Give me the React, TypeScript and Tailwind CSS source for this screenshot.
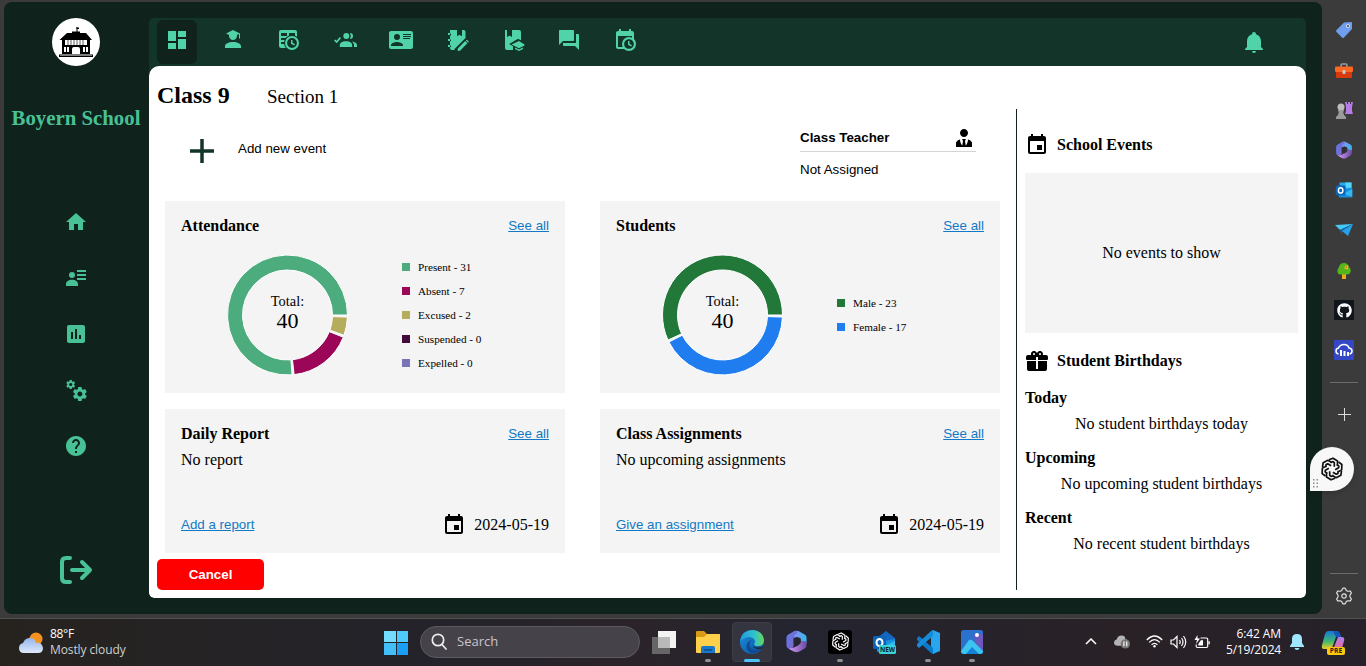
import type { ReactNode } from "react";
import { MdDashboard, MdForum, MdEvent, MdHome, MdPoll, MdHelp } from "react-icons/md";
import { FaGithub } from "react-icons/fa";

const SERIF = "font-['Liberation_Serif',serif]";
const SANS = "font-['Liberation_Sans',sans-serif]";

function Glyph({ d, size = 24 }: { d: string; size?: number }) {
  return (
    <svg width={size} height={size} viewBox="0 0 24 24" fill="currentColor">
      <path d={d} />
    </svg>
  );
}

const accountSchool =
  "M16 8C16 10.21 14.21 12 12 12C9.79 12 8 10.21 8 8L8.11 7.06L5 5.5L12 2L19 5.5V10.5H18V6L15.89 7.06L16 8M12 14C16.42 14 20 15.79 20 18V20H4V18C4 15.79 7.58 14 12 14Z";
const cardAccount =
  "M2,3H22C23.05,3 24,3.95 24,5V19C24,20.05 23.05,21 22,21H2C0.95,21 0,20.05 0,19V5C0,3.95 0.95,3 2,3M14,6V7H22V6H14M14,8V9H21.5L22,9V8H14M14,10V11H21V10H14M8,13.91C6,13.91 2,15 2,17V18H14V17C14,15 10,13.91 8,13.91M8,6A3,3 0 0,0 5,9A3,3 0 0,0 8,12A3,3 0 0,0 11,9A3,3 0 0,0 8,6Z";
const calendarClock =
  "M15,13H16.5V15.82L18.94,17.23L18.19,18.53L15,16.69V13M19,8H5V19H9.67C9.24,18.09 9,17.07 9,16A7,7 0 0,1 16,9C17.07,9 18.09,9.24 19,9.67V8M5,21C3.89,21 3,20.1 3,19V5C3,3.89 3.89,3 5,3H6V1H8V3H16V1H18V3H19A2,2 0 0,1 21,5V11.1C22.24,12.36 23,14.09 23,16A7,7 0 0,1 16,23C14.09,23 12.36,22.24 11.1,21H5M16,11.15A4.85,4.85 0 0,0 11.15,16C11.15,18.68 13.32,20.85 16,20.85A4.85,4.85 0 0,0 20.85,16C20.85,13.32 18.68,11.15 16,11.15Z";
const bell =
  "M21,19V20H3V19L5,17V11C5,7.9 7.03,5.17 10,4.29C10,4.19 10,4.1 10,4A2,2 0 0,1 12,2A2,2 0 0,1 14,4C14,4.1 14,4.19 14,4.29C16.97,5.17 19,7.9 19,11V17L21,19M14,21A2,2 0 0,1 12,23A2,2 0 0,1 10,21";
const gift =
  "M9.06,1.93C7.17,1.92 5.33,3.74 6.17,6H3A2,2 0 0,0 1,8V10A1,1 0 0,0 2,11H11V8H13V11H22A1,1 0 0,0 23,10V8A2,2 0 0,0 21,6H17.83C19,2.73 14.6,0.42 12.57,3.24L12,4L11.43,3.22C10.8,2.33 9.93,1.94 9.06,1.93M9,4C9.89,4 10.34,5.08 9.71,5.71C9.08,6.34 8,5.89 8,5A1,1 0 0,1 9,4M15,4C15.89,4 16.34,5.08 15.71,5.71C15.08,6.34 14,5.89 14,5A1,1 0 0,1 15,4M2,12V20A2,2 0 0,0 4,22H20A2,2 0 0,0 22,20V12H13V20H11V12H2Z";
const accountTie =
  "M12 3C14.21 3 16 4.79 16 7C16 9.21 14.21 11 12 11C9.79 11 8 9.21 8 7C8 4.79 9.79 3 12 3M16 13.54C16 14.6 15.72 17.07 13.81 19.83L13 15L13.94 13.12C13.32 13.05 12.67 13 12 13C11.33 13 10.68 13.05 10.06 13.12L11 15L10.19 19.83C8.28 17.07 8 14.6 8 13.54C5.61 14.24 4 15.5 4 17V21H20V17C20 15.5 18.4 14.24 16 13.54Z";
const accountDetails =
  "M8,6A3,3 0 0,1 8,12A3,3 0 0,1 8,6M2,20V18C2,15.5 4.7,13.7 8,13.7C11.3,13.7 14,15.5 14,18V20ZM13,4H22V6H13ZM13,8H22V10H13ZM13,12H22V14H13Z";
const cogs =
  "M15.9,18.45C17.25,18.45 18.35,17.35 18.35,16C18.35,14.65 17.25,13.55 15.9,13.55C14.54,13.55 13.45,14.65 13.45,16C13.45,17.35 14.54,18.45 15.9,18.45M21.1,16.68L22.58,17.84C22.71,17.95 22.75,18.13 22.66,18.29L21.26,20.71C21.17,20.86 21,20.92 20.83,20.86L19.09,20.16C18.73,20.44 18.33,20.67 17.91,20.85L17.64,22.7C17.62,22.87 17.47,23 17.3,23H14.5C14.32,23 14.18,22.87 14.15,22.7L13.89,20.85C13.46,20.67 13.07,20.44 12.71,20.16L10.96,20.86C10.81,20.92 10.62,20.86 10.54,20.71L9.14,18.29C9.05,18.13 9.09,17.95 9.22,17.84L10.7,16.68L10.65,16L10.7,15.31L9.22,14.16C9.09,14.05 9.05,13.86 9.14,13.71L10.54,11.29C10.62,11.13 10.81,11.07 10.96,11.13L12.71,11.84C13.07,11.56 13.46,11.32 13.89,11.15L14.15,9.29C14.18,9.13 14.32,9 14.5,9H17.3C17.47,9 17.62,9.13 17.64,9.29L17.91,11.15C18.33,11.32 18.73,11.56 19.09,11.84L20.83,11.13C21,11.07 21.17,11.13 21.26,11.29L22.66,13.71C22.75,13.86 22.71,14.05 22.58,14.16L21.1,15.31L21.15,16L21.1,16.68M6.69,8.07C7.56,8.07 8.26,7.37 8.26,6.5C8.26,5.63 7.56,4.92 6.69,4.92A1.58,1.58 0 0,0 5.11,6.5C5.11,7.37 5.82,8.07 6.69,8.07M10.03,6.94L11,7.68C11.07,7.75 11.09,7.87 11.03,7.97L10.13,9.53C10.08,9.63 9.96,9.67 9.86,9.63L8.74,9.18L8,9.62L7.81,10.81C7.79,10.92 7.7,11 7.59,11H5.79C5.67,11 5.58,10.92 5.56,10.81L5.4,9.62L4.64,9.18L3.52,9.63C3.41,9.67 3.3,9.63 3.24,9.53L2.34,7.97C2.28,7.87 2.31,7.75 2.39,7.68L3.34,6.94L3.31,6.5L3.34,6.06L2.39,5.32C2.31,5.25 2.28,5.13 2.34,5.03L3.24,3.47C3.3,3.37 3.41,3.33 3.52,3.37L4.63,3.82L5.4,3.38L5.56,2.19C5.58,2.08 5.67,2 5.79,2H7.59C7.7,2 7.79,2.08 7.81,2.19L8,3.38L8.74,3.82L9.86,3.37C9.96,3.33 10.08,3.37 10.13,3.47L11.03,5.03C11.09,5.13 11.07,5.25 11,5.32L10.03,6.06L10.06,6.5L10.03,6.94Z";

const HEADER_BG = "#133429";

function TableClock() {
  return (
    <svg width="24" height="24" viewBox="0 0 24 24" fill="currentColor">
      <path fillRule="evenodd" d="M4 2H18A2 2 0 0 1 20 4V20H4A2 2 0 0 1 2 18V4A2 2 0 0 1 4 2ZM4 5V8H10V5ZM12 5V8H18V5ZM4 10V12H9V10ZM4 14V16H8V14Z" />
      <circle cx="15" cy="15" r="8" fill={HEADER_BG} />
      <path fillRule="evenodd" d="M15 8A7 7 0 1 1 15 22A7 7 0 1 1 15 8ZM15 10.1A4.9 4.9 0 1 0 15 19.9A4.9 4.9 0 1 0 15 10.1Z" />
      <path d="M14 12H15.5V14.8L18 16.2L17.2 17.5L14 15.7Z" />
    </svg>
  );
}

function PeopleCheck() {
  return (
    <svg width="24" height="24" viewBox="0 0 24 24" fill="currentColor">
      <path d="M1 12.6L2.2 11.4L3.6 12.8L6.8 9.1L8 10.3L3.7 15.2Z" />
      <circle cx="13.3" cy="8" r="3" />
      <path d="M17 5A3 3 0 1 1 17 11Q18.6 8 17 5Z" />
      <path d="M6.8 19V17.4C6.8 14.6 9.6 13.3 13 13.3S19.2 14.6 19.2 17.4V19ZM18.8 13.4C22 13.8 24 15 24 17.2V19H21V17.3C21 15.7 20.2 14.3 18.8 13.4Z" />
    </svg>
  );
}

function NotebookEdit() {
  return (
    <svg width="24" height="24" viewBox="0 0 24 24" fill="currentColor">
      <path d="M5 2H12V8.2L14.5 6.7L17 8.2V2H19A2 2 0 0 1 20.5 4V10L9.5 21V22H7A2 2 0 0 1 5 20Z" />
      <path d="M3 5H7V7H3ZM3 11H7V13H3ZM3 17H7V19H3Z" />
      <path d="M5 7.5H6V5.5H5ZM5 13H6V11.5H5ZM5 19H6V17.5H5Z" fill={HEADER_BG} />
      <path d="M12.8 20.5L20.2 13.1L22.4 15.3L15 22.7L12.8 23ZM20.9 12.4L21.3 12Q21.8 11.5 22.4 12.1L23.5 13.2Q24 13.7 23.5 14.3L23 14.7Z" />
    </svg>
  );
}

function BookEducation() {
  return (
    <svg width="24" height="24" viewBox="0 0 24 24" fill="currentColor">
      <path d="M4 2H6V9L8.5 7.5L11 9V2H18A2 2 0 0 1 20 4V12.2L17 10.8L8.2 16L12 18.3V22H6A2 2 0 0 1 4 20Z" />
      <path d="M18 13L10.5 16.6L18 20.2L23.5 17.6V16.6ZM14 19.6V21L18 23L22 21V19.600L18 21.6Z" />
    </svg>
  );
}

function SchoolLogo() {
  return (
    <svg width="48" height="48" viewBox="0 0 48 48">
      <circle cx="24" cy="24" r="24" fill="#fff" />
      <path d="M25 9V14" stroke="#000" strokeWidth="1" />
      <path d="M24.5 9.5H27V11H24.5Z" />
      <path d="M20 13.5H28V15H34L40 22H38V36H10V22H7.500L15 15H20Z" />
      <path d="M7 36.500H41V39H7Z" />
      <path d="M8 37.500H40" stroke="#fff" strokeWidth="0.5" />
      <g fill="#fff">
        <path d="M13 22H35V27H13Z" />
        <path d="M12 29H14V34H12ZM15 29H17V34H15ZM31 29H33V34H31ZM34 29H36V34H34Z" />
        <path d="M20 36V31Q20 29 22 29H26Q28 29 28 31V36Z" />
      </g>
      <path d="M16 22V27M19 22V27M22 22V27M25 22V27M28 22V27M31 22V27" stroke="#333" strokeWidth=".8" />
    </svg>
  );
}

interface Slice {
  label: string;
  value: number;
  fill: string;
  swatch: string;
}

function point(r: number, deg: number) {
  const a = (deg * Math.PI) / 180;
  return `${(60.5 + r * Math.cos(a)).toFixed(2)} ${(60 - r * Math.sin(a)).toFixed(2)}`;
}

function Donut({ slices }: { slices: Slice[] }) {
  const filled = slices.filter((s) => s.value > 0);
  const total = filled.reduce((sum, s) => sum + s.value, 0);
  const span = 360 - filled.length * 2;
  let cursor = 0;
  return (
    <div className="grid size-[121px] place-items-center">
      <svg width="121" height="121" viewBox="0 0 121 121" className="col-start-1 row-start-1 overflow-visible">
        {filled.map((s) => {
          const start = cursor;
          const end = start + (s.value / total) * span;
          cursor = end + 2;
          const big = end - start > 180 ? 1 : 0;
          return (
            <path
              key={s.label}
              d={`M${point(60, start)}A60 60 0 ${big} 0 ${point(60, end)}L${point(45, end)}A45 45 0 ${big} 1 ${point(45, start)}Z`}
              fill={s.fill}
              stroke="#fff"
            />
          );
        })}
      </svg>
      <div className="col-start-1 row-start-1 flex flex-col items-center pb-1.5">
        <span className="text-[14.4px] leading-4">Total:</span>
        <span className="text-[22px] leading-6">{total}</span>
      </div>
    </div>
  );
}

function Link({ children }: { children: ReactNode }) {
  return (
    <a href="#" className={`${SANS} text-[13.333px] leading-4 text-[#1179c5] underline`}>
      {children}
    </a>
  );
}

function StatCard({ title, slices }: { title: string; slices: Slice[] }) {
  return (
    <section className="flex h-48 flex-col bg-[#f4f4f4] px-4 pt-4">
      <div className="flex h-[38px] items-start justify-between">
        <h3 className="text-base leading-[18px] font-bold">{title}</h3>
        <span className="flex pt-px"><Link>See all</Link></span>
      </div>
      <div className="flex h-[121px] items-center pl-[46px]">
        <Donut slices={slices} />
        <ul className="ml-[54px] flex flex-col pb-px">
          {slices.map((s) => (
            <li key={s.label} className="flex h-6 items-center gap-2 text-[11.2px]">
              <span className={`size-2 ${s.swatch}`} />
              {s.label} - {s.value}
            </li>
          ))}
        </ul>
      </div>
    </section>
  );
}

function TaskCard({ title, empty, action }: { title: string; empty: string; action: string }) {
  return (
    <section className="flex h-36 flex-col bg-[#f4f4f4] px-4 pt-4">
      <div className="flex h-[26px] items-start justify-between">
        <h3 className="text-base leading-[18px] font-bold">{title}</h3>
        <span className="flex pt-px"><Link>See all</Link></span>
      </div>
      <p className="text-base leading-[18px]">{empty}</p>
      <div className="mt-11 flex h-6 items-center justify-between">
        <Link>{action}</Link>
        <span className="flex items-center gap-2 text-base leading-6">
          <MdEvent size={24} /> 2024-05-19
        </span>
      </div>
    </section>
  );
}

const attendance: Slice[] = [
  { label: "Present", value: 31, fill: "#4dac7d", swatch: "bg-[#4dac7d]" },
  { label: "Absent", value: 7, fill: "#9b0658", swatch: "bg-[#9b0658]" },
  { label: "Excused", value: 2, fill: "#b6ad5c", swatch: "bg-[#b6ad5c]" },
  { label: "Suspended", value: 0, fill: "#430a3e", swatch: "bg-[#430a3e]" },
  { label: "Expelled", value: 0, fill: "#7974b8", swatch: "bg-[#7974b8]" },
];
const students: Slice[] = [
  { label: "Male", value: 23, fill: "#227839", swatch: "bg-[#227839]" },
  { label: "Female", value: 17, fill: "#207df0", swatch: "bg-[#207df0]" },
];
const birthdays = [
  ["Today", "No student birthdays today"],
  ["Upcoming", "No upcoming student birthdays"],
  ["Recent", "No recent student birthdays"],
];

const navIcons = [
  <MdDashboard size={24} />,
  <Glyph d={accountSchool} />,
  <TableClock />,
  <PeopleCheck />,
  <Glyph d={cardAccount} />,
  <NotebookEdit />,
  <BookEducation />,
  <MdForum size={24} />,
  <Glyph d={calendarClock} />,
];
const sideIcons = [
  <MdHome size={24} />,
  <Glyph d={accountDetails} />,
  <MdPoll size={24} />,
  <Glyph d={cogs} />,
  <MdHelp size={24} />,
];

function Hexagon({ size, hole }: { size: number; hole: string }) {
  return (
    <svg width={size} height={size} viewBox="0 0 24 24">
      <defs>
        <linearGradient id="hexTop" x1="0" x2="1"><stop stopColor="#8a8ff0" /><stop offset="1" stopColor="#35b8f0" /></linearGradient>
        <linearGradient id="hexLeft" x1="0" y1="0" x2="1" y2="1"><stop stopColor="#5a7be8" /><stop offset="1" stopColor="#8a62c8" /></linearGradient>
        <linearGradient id="hexLow" x1="0" x2="1"><stop stopColor="#d39af2" /><stop offset="1" stopColor="#6a4aa6" /></linearGradient>
      </defs>
      <path d="M9 1.500Q12 0 15 1.500L21 5Q22.500 6 22.500 8V14L16 11V8H9Z" fill="url(#hexTop)" />
      <path d="M9 1.500L3 5Q1.500 6 1.500 8V16Q1.500 18 3 19L7 21L9 16V8Q9 5 13 3L12 .7Z" fill="url(#hexLeft)" />
      <path d="M22.500 12V16Q22.500 18 21 19L15 22.500Q12 24 9 22.500L4 19.500Q9 19 15 15V11Z" fill="url(#hexLow)" />
      <path d="M9 9L12.500 7L16.500 9.500V13.500L12.500 16.500L9 14.500Z" fill={hole} />
    </svg>
  );
}

function Outlook({ size, tag }: { size: number; tag?: boolean }) {
  return (
    <svg width={size} height={size} viewBox="0 0 24 24">
      {tag ? (
        <path d="M5 8L14 1L23 8V20H5Z" fill="#1466c0" />
      ) : (
        <path d="M6 2H21Q22 2 22 3V21H6Z" fill="#28a8ea" />
      )}
      <path d="M14 2H22V9H14Z" fill="#50d9ff" opacity={tag ? 0 : 1} />
      <path d="M5 12L23 9V21Q23 22 22 22H6Q5 22 5 21Z" fill="#1490df" />
      <path d="M10 17L23 11V21Z" fill="#35b8f1" />
      <rect x="1" y="6" width="13" height="13" rx="1.5" fill="#0a64b8" />
      <ellipse cx="7.500" cy="12.500" rx="3" ry="3.500" fill="none" stroke="#fff" strokeWidth="2" />
      {tag && (
        <>
          <rect x="7" y="15" width="17" height="9" rx="1.5" fill="#37d3d6" />
          <text x="15.500" y="22" textAnchor="middle" fontSize="6.500" fontWeight="700" fontFamily="Open Sans" fill="#10242b">NEW</text>
        </>
      )}
    </svg>
  );
}

function Swirl({ size, color, weight }: { size: number; color: string; weight: number }) {
  return (
    <svg width={size} height={size} viewBox="-12 -12 24 24" fill="none" stroke={color} strokeWidth={weight} strokeLinejoin="round">
      {[0, 60, 120, 180, 240, 300].map((r) => (
        <path key={r} transform={`rotate(${r})`} d="M-3 -9.200L1 -10.800L5.500 -8V-3.800M-1.500 -6.200L1 -7.400L2.300 -6.300V-2.300" />
      ))}
    </svg>
  );
}

function Tag() {
  return (
    <svg width="18" height="18" viewBox="0 0 18 18">
      <path d="M9 1.500L16 1Q17 1 17 2V8L9 16.500Q8 17.500 7 16.500L1.500 11Q.5 10 1.500 9Z" fill="#6f9fec" />
      <circle cx="13" cy="5" r="1.800" fill="#fff" /><circle cx="13" cy="5" r="1" fill="#333" />
    </svg>
  );
}

function Toolbox() {
  return (
    <svg width="18" height="16" viewBox="0 0 18 16" className="mt-0.5">
      <path d="M6 4V2Q6 1 7 1H11Q12 1 12 2V4" fill="none" stroke="#9a9a9a" strokeWidth="1.500" />
      <rect y="3.500" width="18" height="5.500" rx="1" fill="#fb6725" />
      <path d="M1 9H17V14Q17 15 16 15H2Q1 15 1 14Z" fill="#d93a0c" />
      <rect x="7.500" y="7" width="3" height="4" rx="1" fill="#c6ccd2" />
    </svg>
  );
}

function Chess() {
  return (
    <svg width="18" height="20" viewBox="0 0 18 20">
      <path d="M10 2H12V4H13V2H15V4H16V2H18L17 7V11L18 14H10L11 11V7Z" fill="#b77ae6" />
      <circle cx="6" cy="7" r="3.500" fill="#bdbdbd" />
      <path d="M3 10H9V11.500H8L9 15L11 17V19H1V17L3 15L4 11.500H3Z" fill="#9b9b9b" />
    </svg>
  );
}

function Plane() {
  return (
    <svg width="18" height="14" viewBox="0 0 18 14">
      <path d="M0 2L18 1L5 7Z" fill="#45c9f5" /><path d="M5 7L18 1L7 9V12Z" fill="#1264a8" /><path d="M7 8L18 1L13 13Z" fill="#26a0e8" />
    </svg>
  );
}

function Tree() {
  return (
    <svg width="16" height="18" viewBox="0 0 16 18" className="mt-0.5">
      <path d="M6 11H10V17H6Z" fill="#f0a91b" />
      <path d="M8 1Q12 1 13 5Q16 8 14 11Q13 13 10 12.500H5Q2 13 1.500 10Q1 8 3 5Q4 1 8 1Z" fill="#55b51c" />
      <path d="M9.500 3L11 4L12.500 3.500L12 5.500L12 7.500L9.500 7L8 6L9 5Z" fill="#ffb818" /><circle cx="10.400" cy="5.300" r=".7" fill="#e04b1c" />
    </svg>
  );
}

function CloudTile() {
  return (
    <span className="grid size-5 place-items-center bg-[#3448c5]">
      <svg width="18" height="14" viewBox="0 0 18 14" fill="none" stroke="#fff" strokeWidth="1.500">
        <path d="M3.500 11Q1 10.500 1 8Q1 5.500 3.500 5Q5 1.500 9 1.500Q13 1.500 14 5Q17 5.500 17 8Q17 10.500 14.500 11" />
        <path d="M6 7V13M9.500 8V13M13 9V13" strokeWidth="2" />
      </svg>
    </span>
  );
}

const railIcons = [
  <Tag />,
  <Toolbox />,
  <Chess />,
  <Hexagon size={18} hole="#303034" />,
  <Outlook size={18} />,
  <Plane />,
  <Tree />,
  <span className="grid size-5 place-items-center bg-[#10151b] text-white"><FaGithub size={15} /></span>,
  <CloudTile />,
];

function GearOutline() {
  const pts = Array.from({ length: 24 }, (_, i) => {
    const r = i % 4 < 2 ? 8 : 6;
    const a = ((i * 15 - 97.5) * Math.PI) / 180;
    return `${(9 + r * Math.cos(a)).toFixed(2)},${(9 + r * Math.sin(a)).toFixed(2)}`;
  }).join(" ");
  return (
    <svg width="18" height="18" viewBox="0 0 18 18" fill="none" stroke="#ddd" strokeWidth="1.200" strokeLinejoin="round">
      <polygon points={pts} /><circle cx="9" cy="9" r="2.200" />
    </svg>
  );
}

function Rail() {
  return (
    <aside className="relative flex h-[618px] w-11 flex-col items-center pt-2.5">
      {railIcons.map((icon, i) => (
        <span key={i} className="flex h-10 items-center justify-center">{icon}</span>
      ))}
      <span className="mt-3 h-px w-7 bg-[#6c6c6c]" />
      <svg width="13" height="13" viewBox="0 0 13 13" className="mt-[25px]" stroke="#ddd"><path d="M6.500 0V13M0 6.500H13" /></svg>
      <span className="mt-[152px] h-px w-7 bg-[#6c6c6c]" />
      <span className="mt-[13px]"><GearOutline /></span>
      <div className="absolute top-[447px] -left-3 grid size-11 place-items-center rounded-full rounded-bl-sm bg-[#f8f8f8] shadow-md">
        <Swirl size={24} color="#111" weight={1.7} />
        <svg width="6" height="9" viewBox="0 0 6 9" fill="#8b8b96" className="absolute bottom-[3px] left-[3px]">
          <path d="M0 0H1.500V1.500H0ZM3.500 0H5V1.500H3.500ZM0 3.500H1.500V5H0ZM3.500 3.500H5V5H3.500ZM0 7H1.500V8.500H0ZM3.500 7H5V8.500H3.500Z" />
        </svg>
      </div>
    </aside>
  );
}

function Edge() {
  return (
    <svg width="24" height="24" viewBox="0 0 24 24">
      <defs>
        <linearGradient id="edgeTop" x1="0" x2="1"><stop stopColor="#219be0" /><stop offset=".6" stopColor="#2fc2cf" /><stop offset="1" stopColor="#68d953" /></linearGradient>
        <linearGradient id="edgeLow" x1="0" y1="0" x2="1" y2="1"><stop stopColor="#1c91dd" /><stop offset="1" stopColor="#0c4c9a" /></linearGradient>
      </defs>
      <circle cx="12" cy="12" r="12" fill="url(#edgeLow)" />
      <path d="M0 11Q2 0 13 0Q23 1 24 10Q24 16 18 16Q14 16 14 14Q16 12 14 9Q9 4 0 11Z" fill="url(#edgeTop)" />
      <path d="M10 12Q8 18 14 20Q19 21 22 18Q18 24 11 23Q5 20 7 14Q8 11 12 10Z" fill="#104b91" />
      <path d="M13 16Q16 19 24 16L22 18.500Q18 20 14 18Z" fill="#242630" />
    </svg>
  );
}

function Explorer() {
  return (
    <svg width="26" height="24" viewBox="0 0 26 24">
      <path d="M1 2Q1 1 2 1H9L12 4H24Q25 4 25 5V10H1Z" fill="#d99a16" />
      <path d="M1 7H9L12 4H24Q25 4 25 5V22Q25 23 24 23H2Q1 23 1 22Z" fill="#ffd04a" />
      <path d="M6 23V18Q6 16 8 16H18Q20 16 20 18V23Z" fill="#1b78c9" /><path d="M9 19H17V21H9Z" fill="#0e569b" />
    </svg>
  );
}

function VsCode() {
  return (
    <svg width="24" height="24" viewBox="0 0 24 24">
      <path d="M17 0L24 3V21L17 24L15 22V2Z" fill="#27a5ef" />
      <path d="M1 8L3 6L17 18V24L15 23L1 10Z" fill="#0b79c9" /><path d="M1 16L3 18L17 6V0L15 1L1 14Z" fill="#158bd9" />
    </svg>
  );
}

function Photos() {
  return (
    <svg width="24" height="24" viewBox="0 0 24 24">
      <rect x="1" y="0" width="22" height="24" rx="2.500" fill="#2b72cf" />
      <path d="M14 4H23V20L15 13Z" fill="#6b57bd" />
      <path d="M1 21L9 10Q11 9 13 11L23 21Q23 24 20 24H4Q1 24 1 21Z" fill="#3cc4ef" /><path d="M6 24L12 17L19 24Z" fill="#1480d6" />
      <circle cx="17" cy="5" r="2" fill="#fff" />
    </svg>
  );
}

function Desktops() {
  return (
    <svg width="24" height="24" viewBox="0 0 24 24">
      <path d="M6 1H24V18H6Z" fill="#f3f3f3" /><path d="M0 7H18V24H0Z" fill="#666" /><path d="M6 7H18V18H6Z" fill="#b9b9b9" />
    </svg>
  );
}

const tasks: { icon: ReactNode; mark: string }[] = [
  { icon: <Desktops />, mark: "" },
  { icon: <Explorer />, mark: "w-1.5 bg-[#909090]" },
  { icon: <Edge />, mark: "w-4 bg-[#4cc2ff]" },
  { icon: <Hexagon size={23} hole="#242530" />, mark: "" },
  { icon: <span className="grid size-6 place-items-center rounded-[3px] bg-black"><Swirl size={19} color="#fff" weight={1.5} /></span>, mark: "w-1.5 bg-[#909090]" },
  { icon: <Outlook size={24} tag />, mark: "" },
  { icon: <VsCode />, mark: "w-1.5 bg-[#909090]" },
  { icon: <Photos />, mark: "w-1.5 bg-[#909090]" },
];

function Weather() {
  return (
    <svg width="26" height="22" viewBox="0 0 26 22">
      <defs><linearGradient id="cloud" x1="0" y1="0" x2="0" y2="1"><stop stopColor="#93b5ee" /><stop offset="1" stopColor="#dfe9fa" /></linearGradient></defs>
      <circle cx="18" cy="7" r="6.500" fill="#f6931e" />
      <path d="M6 21Q1 21 1 16Q1 12 5 11Q7 6 12 6Q17 6 18 11Q24 10 25 16Q25 21 20 21Z" fill="url(#cloud)" />
    </svg>
  );
}

function Copilot() {
  return (
    <svg width="24" height="26" viewBox="0 0 24 26">
      <defs>
        <linearGradient id="coA" x1="0" y1="0" x2="0" y2="1"><stop stopColor="#1677db" /><stop offset=".6" stopColor="#45b96b" /><stop offset="1" stopColor="#f2cc25" /></linearGradient>
        <linearGradient id="coB" x1="0" y1="0" x2="0" y2="1"><stop stopColor="#aa7ef2" /><stop offset="1" stopColor="#f76a85" /></linearGradient>
      </defs>
      <path d="M7 1H16Q18 1 19 4L20 7H15L11 18Q10 19 8 19H3Q0 19 1 15L4 4Q5 1 7 1Z" fill="url(#coA)" />
      <path d="M17 7H21Q24 7 23 11L21 18Q20 21 17 21H9Q12 20 13 17Z" fill="url(#coB)" />
      <path d="M12 1H16Q18 1 19 4L20 7H15Z" fill="#1556bd" />
      <rect x="6" y="17" width="18" height="8" rx="2" fill="#ffc90e" />
      <text x="15" y="23.400" textAnchor="middle" fontSize="6.800" fontWeight="700" fontFamily="Open Sans" fill="#2a2110">PRE</text>
    </svg>
  );
}

function Taskbar() {
  return (
    <footer className="flex h-12 items-center border-t border-[#505050] bg-[linear-gradient(90deg,#26231f_0%,#24232b_32%,#2b2329_46%,#242530_58%,#292126_82%,#26212a_100%)] font-['Open_Sans','Noto_Sans',sans-serif] text-xs text-white">
      <div className="flex w-[384px] items-center gap-1.5 pl-[18px]">
        <Weather />
        <div className="flex flex-col pb-0.5 text-[12px] leading-4">
          <span className="tracking-[-0.3px]">88°F</span>
          <span className="tracking-[-0.1px] text-[#cfcfcf]">Mostly cloudy</span>
        </div>
      </div>
      <div className="grid size-6 grid-cols-2 gap-px">
        <i className="bg-[#74dcff]" /><i className="bg-[#4fcbfb]" /><i className="bg-[#42bef8]" /><i className="bg-[#199ff5]" />
      </div>
      <div className="mb-0.5 ml-3 flex h-8 w-[220px] items-center gap-2.5 rounded-full border border-[#5c5961] bg-[#46424a] pl-2.5 text-[13px] text-[#c8c6ca]">
        <svg width="16" height="17" viewBox="0 0 16 17" fill="none" stroke="#ececec" strokeWidth="1.700" strokeLinecap="round"><circle cx="7" cy="7" r="5.700" /><path d="M11 11.500L15 16" /></svg>
        Search
      </div>
      <div className="mb-0.5 ml-0.5 flex">
        {tasks.map((t, i) => (
          <span key={i} className="flex w-11 justify-center">
            <span className={`flex h-10 w-10 flex-col items-center rounded-[4px] border pt-[7px] ${i === 2 ? "border-[#3d3e48] bg-[#34353f]" : "border-transparent"}`}>
              <span className="grid h-6 place-items-center">{t.icon}</span>
              <span className={`mt-[5px] h-[3px] shrink-0 rounded-full ${t.mark}`} />
            </span>
          </span>
        ))}
      </div>
      <div className="ml-[91px] flex items-center pb-0.5">
        <svg width="12" height="7" viewBox="0 0 12 7" fill="none" stroke="#fff" strokeWidth="1.500"><path d="M1 6L6 1L11 6" /></svg>
        <svg width="17" height="16" viewBox="0 0 18 16" className="ml-[17px]">
          <path d="M4 12Q0 12 0 8.500Q0 6 3 5Q4 1 8 1Q12 1 12 5Q15 5 15 9Q15 12 12 12Z" fill="#b4b4b4" />
          <circle cx="12" cy="10" r="5" fill="#777" /><path d="M10.500 7.500V12.500M13.500 7.500V12.500" stroke="#fff" strokeWidth="1.200" />
        </svg>
        <svg width="17" height="13" viewBox="0 0 17 13" className="ml-[15px]" fill="none" stroke="#fff" strokeWidth="1.300">
          <path d="M.8 5Q8.500 -3 16.200 5M3.200 7.400Q8.500 2 13.800 7.400M5.600 9.700Q8.500 7 11.400 9.700" /><circle cx="8.500" cy="11.300" r="1.200" fill="#fff" stroke="none" />
        </svg>
        <svg width="17" height="14" viewBox="0 0 17 14" className="ml-[7px]" fill="none" stroke="#fff" strokeWidth="1.200">
          <path d="M1 5H3.500L7 1.500V12.500L3.500 9H1ZM9.500 5Q11 7 9.500 9M11.500 3Q14.500 7 11.500 11M13.500 1Q18 7 13.500 13" />
        </svg>
        <svg width="16" height="14" viewBox="0 0 16 14" className="ml-[7px]" fill="none" stroke="#fff" strokeWidth="1.200">
          <path d="M6.500 3H12.500Q13.700 3 13.700 4.200V11.300Q13.700 12.500 12.500 12.500H3.500Q2.200 12.500 2.200 11.300V9.500M15.200 6.200V9.300" /><path d="M6.800 5.200H9V10.400H4.300V9Z" fill="#fff" stroke="none" /><path d="M3.500 0L.5 5H3L2 9L6 3.500H3.500Z" fill="#fff" stroke="none" />
        </svg>
        <div className="ml-[7px] w-16 text-right text-[12px] leading-4 whitespace-nowrap">
          <div className="tracking-[-0.1px]">6:42 AM</div>
          <div className="tracking-[-0.2px]">5/19/2024</div>
        </div>
        <svg width="14" height="16" viewBox="0 0 14 16" className="ml-[9px]" fill="#9fe6ff"><path d="M7 0Q12 0 12 5V9L14 12V13H0V12L2 9V5Q2 0 7 0ZM4.500 14H9.500Q9 16 7 16T4.500 14Z" /></svg>
        <span className="ml-[17px] pt-0.5"><Copilot /></span>
      </div>
    </footer>
  );
}

export default function App() {
  return (
    <div className={`${SERIF} flex h-[666px] w-[1366px] flex-col overflow-hidden bg-[#3b3b3b] text-black`}>
      <div className="flex h-[618px]">
        <div className="mt-0.5 ml-1 flex h-[612px] w-[1318px] rounded-lg bg-[#0f231c]">
          <aside className="flex w-[145px] flex-col items-center pt-4 pr-px text-[#49c196]">
            <SchoolLogo />
            <h2 className="mt-10 text-[20.8px] leading-6 font-bold whitespace-nowrap">Boyern School</h2>
            <nav className="mt-20 flex flex-col gap-8">
              {sideIcons.map((icon, i) => <span key={i} className="size-6">{icon}</span>)}
            </nav>
            <svg width="34" height="30" viewBox="0 0 34 30" className="mt-[97px]" fill="none" stroke="currentColor" strokeWidth="4" strokeLinecap="round" strokeLinejoin="round">
              <path d="M11 3H7Q3 3 3 7V23Q3 27 7 27H11M13 15H31M23 7L31 15L23 23" />
            </svg>
          </aside>
          <div className="mt-4 flex h-[580px] w-[1157px] flex-col overflow-hidden rounded-[5px] bg-[#133429]">
            <header className="flex h-12 items-start justify-between pt-0.5 pr-10 pl-2 text-[#50d3a8]">
              <nav className="flex gap-4">
                {navIcons.map((icon, i) => (
                  <span key={i} className={`flex h-11 w-10 justify-center rounded-md pt-2 ${i === 0 ? "bg-[#0f231c]" : ""}`}>{icon}</span>
                ))}
              </nav>
              <span className="pt-2.5"><Glyph d={bell} /></span>
            </header>
            <main className="h-[532px] rounded-t-[10px] rounded-b-[5px] bg-white">
              <div className="flex h-[43px] items-start pl-2">
                <h1 className="w-[110px] pt-4 text-2xl leading-[27px] font-bold">Class 9</h1>
                <span className="pt-5 text-[19px] leading-[22px]">Section 1</span>
              </div>
              <div className="flex h-[481px]">
                <div className="w-[867px]">
                  <div className="flex h-[92px] justify-between pr-10 pl-[41px]">
                    <div className="flex items-start">
                      <svg width="24" height="24" viewBox="0 0 24 24" stroke="#133429" strokeWidth="3.500" className="mt-[30px]"><path d="M12 0V24M0 12H24" /></svg>
                      <span className={`${SANS} mt-8 ml-6 text-[13.333px] leading-4`}>Add new event</span>
                    </div>
                    <div className={`${SANS} w-44 pt-4 text-[13.333px]`}>
                      <div className="flex h-[27px] items-center justify-between border-b border-[#d5d5d5] font-bold">
                        Class Teacher
                        <Glyph d={accountTie} />
                      </div>
                      <p className="mt-2.5 leading-4">Not Assigned</p>
                    </div>
                  </div>
                  <div className="grid grid-cols-[400px_400px] gap-x-[35px] gap-y-4 pl-4">
                    <StatCard title="Attendance" slices={attendance} />
                    <StatCard title="Students" slices={students} />
                    <TaskCard title="Daily Report" empty="No report" action="Add a report" />
                    <TaskCard title="Class Assignments" empty="No upcoming assignments" action="Give an assignment" />
                  </div>
                  <button className={`${SANS} mt-1.5 ml-2 block h-[31px] w-[107px] rounded-[5px] bg-[#ff0000] text-[13.333px] font-bold text-white`}>Cancel</button>
                </div>
                <aside className="w-[290px] border-l border-[#0f231c] px-2 pt-6">
                  <h3 className="flex h-6 items-center gap-2 text-base font-bold"><MdEvent size={24} />School Events</h3>
                  <div className="mt-4 flex h-40 items-center justify-center bg-[#f4f4f4] text-base">No events to show</div>
                  <h3 className="mt-4 flex h-6 items-center gap-2 text-base font-bold"><Glyph d={gift} />Student Birthdays</h3>
                  <div className="mt-4 flex flex-col gap-4">
                    {birthdays.map(([title, text]) => (
                      <div key={title} className="flex h-11 flex-col gap-2 text-base leading-[18px]">
                        <h4 className="font-bold">{title}</h4>
                        <p className="text-center">{text}</p>
                      </div>
                    ))}
                  </div>
                </aside>
              </div>
            </main>
          </div>
        </div>
        <Rail />
      </div>
      <Taskbar />
    </div>
  );
}
